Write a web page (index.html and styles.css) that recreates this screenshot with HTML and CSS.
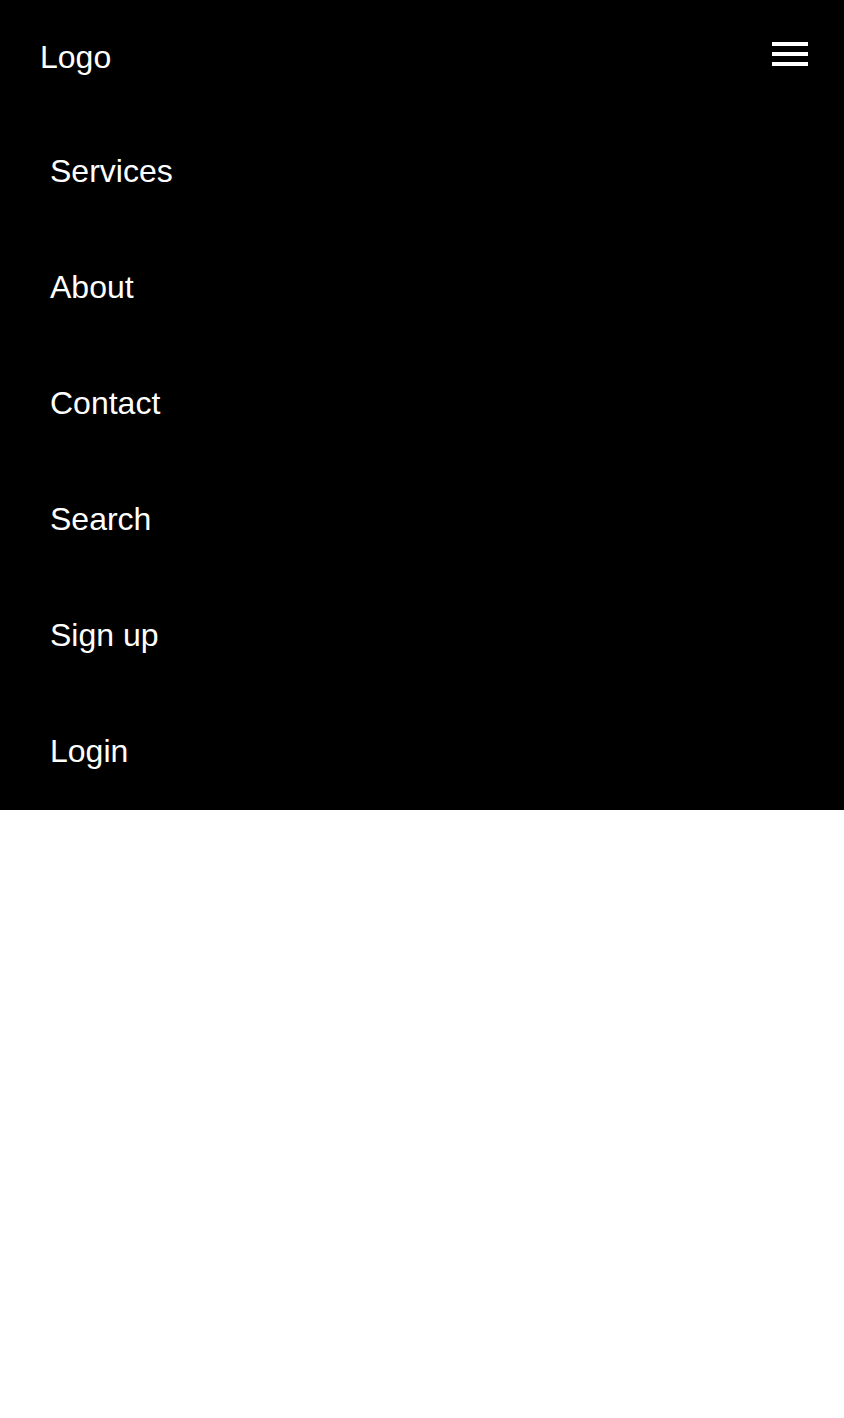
FILE: index.html
```html
<!DOCTYPE html>
<html lang="en">
<head>
<meta charset="utf-8">
<title>Menu</title>
<link rel="stylesheet" href="styles.css">
</head>
<body>
<nav class="nav">
  <div class="nav-header">
    <a class="logo" href="#">Logo</a>
    <button class="burger" aria-label="Menu">
      <span class="bar"></span>
      <span class="bar"></span>
      <span class="bar"></span>
    </button>
  </div>
  <ul class="menu">
    <li class="menu-item"><a href="#">Services</a></li>
    <li class="menu-item"><a href="#">About</a></li>
    <li class="menu-item"><a href="#">Contact</a></li>
    <li class="menu-item"><a href="#">Search</a></li>
    <li class="menu-item"><a href="#">Sign up</a></li>
    <li class="menu-item"><a href="#">Login</a></li>
  </ul>
</nav>
</body>
</html>
```
FILE: styles.css
```css
* { box-sizing: border-box; }
html, body {
  margin: 0;
  padding: 0;
  background: #fff;
}
body {
  font-family: "Liberation Sans", Arial, sans-serif;
}
.nav {
  background: #000;
  color: #fff;
  padding-bottom: 1px;
}
.nav-header {
  display: flex;
  justify-content: space-between;
  align-items: flex-start;
  height: 113px;
  padding: 39px 36px 0 40px;
}
.logo {
  color: #fff;
  text-decoration: none;
  font-size: 32px;
  line-height: 36px;
}
.burger {
  display: flex;
  flex-direction: column;
  gap: 6px;
  width: 36px;
  margin-top: 3px;
  padding: 0;
  border: 0;
  background: none;
  cursor: pointer;
}
.bar {
  display: block;
  width: 36px;
  height: 4px;
  background: #fff;
}
.menu {
  list-style: none;
  margin: 0;
  padding: 0 50px;
}
.menu-item {
  padding: 40px 0;
  font-size: 32px;
  line-height: 36px;
}
.menu-item a {
  color: #fff;
  text-decoration: none;
}
```
